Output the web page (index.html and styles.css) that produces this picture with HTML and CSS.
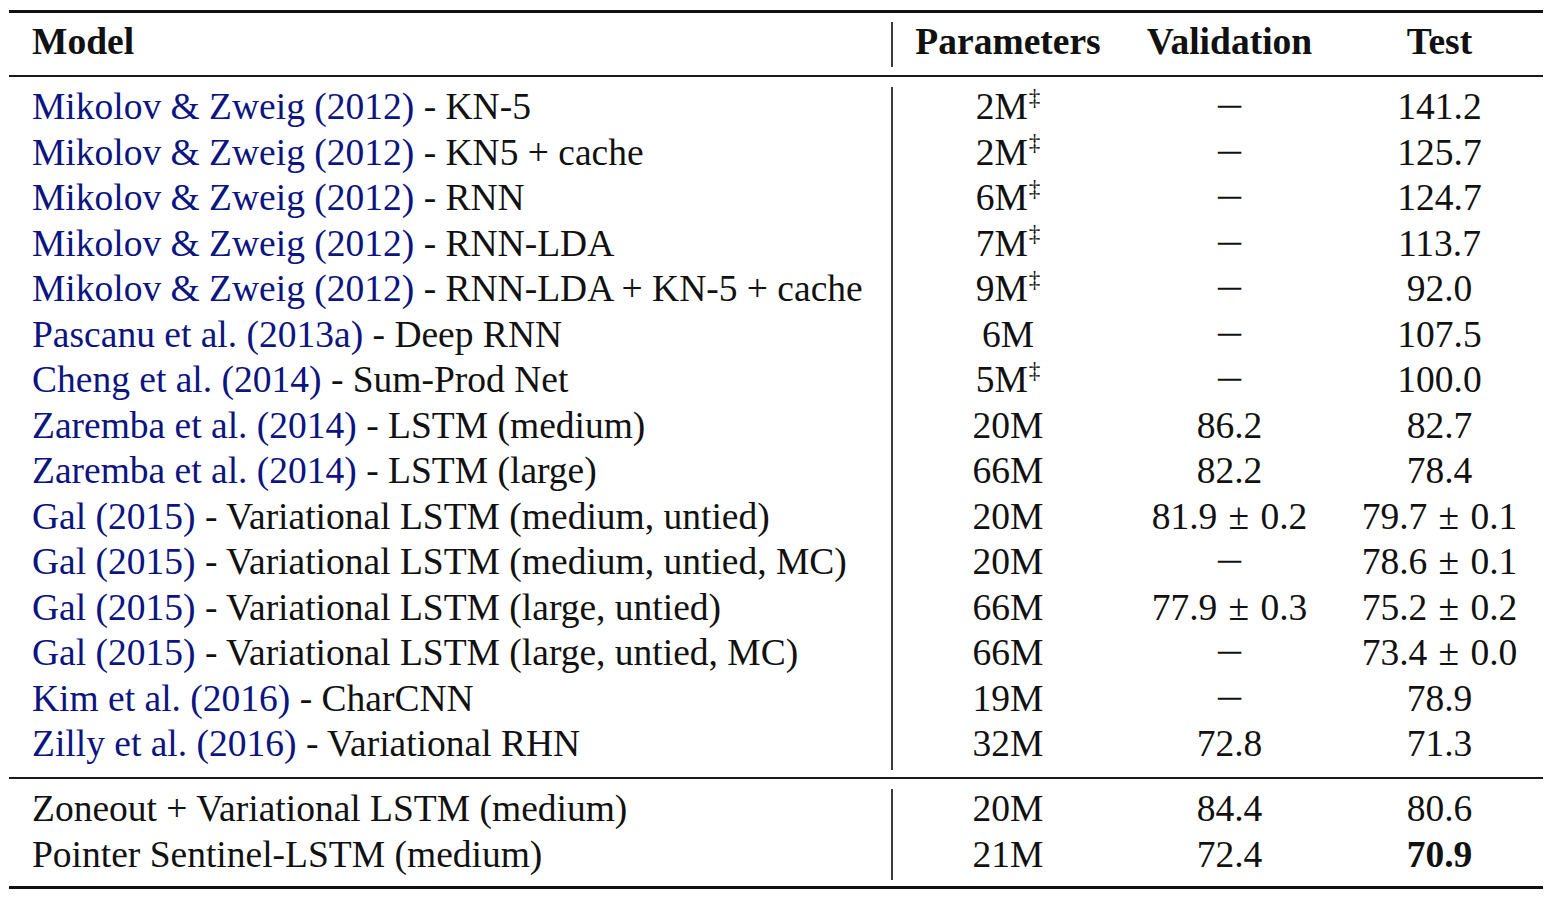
FILE: index.html
```html
<!DOCTYPE html>
<html>
<head>
<meta charset="utf-8">
<link rel="stylesheet" href="styles.css">
</head>
<body>
<div class="table">
  <div class="rule thick"></div>
  <div class="sec head">
    <div class="c model">Model</div>
    <div class="c params">Parameters</div>
    <div class="c">Validation</div>
    <div class="c">Test</div>
  </div>
  <div class="rule"></div>
  <div class="sec body">
    <div class="c model"><span class="cite">Mikolov &amp; Zweig (2012)</span> - KN-5</div>
    <div class="c params">2M<sup>‡</sup></div>
    <div class="c"><span class="dash">−</span></div>
    <div class="c">141.2</div>

    <div class="c model"><span class="cite">Mikolov &amp; Zweig (2012)</span> - KN5 + cache</div>
    <div class="c params">2M<sup>‡</sup></div>
    <div class="c"><span class="dash">−</span></div>
    <div class="c">125.7</div>

    <div class="c model"><span class="cite">Mikolov &amp; Zweig (2012)</span> - RNN</div>
    <div class="c params">6M<sup>‡</sup></div>
    <div class="c"><span class="dash">−</span></div>
    <div class="c">124.7</div>

    <div class="c model"><span class="cite">Mikolov &amp; Zweig (2012)</span> - RNN-LDA</div>
    <div class="c params">7M<sup>‡</sup></div>
    <div class="c"><span class="dash">−</span></div>
    <div class="c">113.7</div>

    <div class="c model"><span class="cite">Mikolov &amp; Zweig (2012)</span> - RNN-LDA + KN-5 + cache</div>
    <div class="c params">9M<sup>‡</sup></div>
    <div class="c"><span class="dash">−</span></div>
    <div class="c">92.0</div>

    <div class="c model"><span class="cite">Pascanu et al. (2013a)</span> - Deep RNN</div>
    <div class="c params">6M</div>
    <div class="c"><span class="dash">−</span></div>
    <div class="c">107.5</div>

    <div class="c model"><span class="cite">Cheng et al. (2014)</span> - Sum-Prod Net</div>
    <div class="c params">5M<sup>‡</sup></div>
    <div class="c"><span class="dash">−</span></div>
    <div class="c">100.0</div>

    <div class="c model"><span class="cite">Zaremba et al. (2014)</span> - LSTM (medium)</div>
    <div class="c params">20M</div>
    <div class="c">86.2</div>
    <div class="c">82.7</div>

    <div class="c model"><span class="cite">Zaremba et al. (2014)</span> - LSTM (large)</div>
    <div class="c params">66M</div>
    <div class="c">82.2</div>
    <div class="c">78.4</div>

    <div class="c model"><span class="cite">Gal (2015)</span> - Variational LSTM (medium, untied)</div>
    <div class="c params">20M</div>
    <div class="c">81.9<span class="pm">±</span>0.2</div>
    <div class="c">79.7<span class="pm">±</span>0.1</div>

    <div class="c model"><span class="cite">Gal (2015)</span> - Variational LSTM (medium, untied, MC)</div>
    <div class="c params">20M</div>
    <div class="c"><span class="dash">−</span></div>
    <div class="c">78.6<span class="pm">±</span>0.1</div>

    <div class="c model"><span class="cite">Gal (2015)</span> - Variational LSTM (large, untied)</div>
    <div class="c params">66M</div>
    <div class="c">77.9<span class="pm">±</span>0.3</div>
    <div class="c">75.2<span class="pm">±</span>0.2</div>

    <div class="c model"><span class="cite">Gal (2015)</span> - Variational LSTM (large, untied, MC)</div>
    <div class="c params">66M</div>
    <div class="c"><span class="dash">−</span></div>
    <div class="c">73.4<span class="pm">±</span>0.0</div>

    <div class="c model"><span class="cite">Kim et al. (2016)</span> - CharCNN</div>
    <div class="c params">19M</div>
    <div class="c"><span class="dash">−</span></div>
    <div class="c">78.9</div>

    <div class="c model"><span class="cite">Zilly et al. (2016)</span> - Variational RHN</div>
    <div class="c params">32M</div>
    <div class="c">72.8</div>
    <div class="c">71.3</div>
  </div>
  <div class="rule"></div>
  <div class="sec last">
    <div class="c model">Zoneout + Variational LSTM (medium)</div>
    <div class="c params">20M</div>
    <div class="c">84.4</div>
    <div class="c">80.6</div>

    <div class="c model">Pointer Sentinel-LSTM (medium)</div>
    <div class="c params">21M</div>
    <div class="c">72.4</div>
    <div class="c"><b class="best">70.9</b></div>
  </div>
  <div class="rule thick"></div>
</div>
</body>
</html>
```

FILE: styles.css
```css
html, body {
  margin: 0;
  padding: 0;
  background: #ffffff;
}

body {
  font-family: "Liberation Serif", "Times New Roman", serif;
  font-size: 37.5px;
  color: #111111;
}

.table {
  width: 1534px;
  margin: 10px 0 0 9px;
}

.rule {
  height: 2px;
  background: #1a1a1a;
}

.rule.thick {
  height: 3px;
  background: #111111;
}

.sec {
  display: grid;
  grid-template-columns: 882px 232px 213px 207px;
}

.head {
  margin: 9px 0 8px;
  font-weight: bold;
}

.body {
  margin: 10px 0 7.5px;
}

.last {
  margin: 10px 0 6px;
}

.c {
  text-align: center;
  line-height: 39.5px;
  height: 39.5px;
  padding-bottom: 6px;
  white-space: nowrap;
}

.head .c {
  line-height: 39px;
  height: 39px;
}

.c.model {
  text-align: left;
  padding-left: 23px;
}

.c.params {
  border-left: 2px solid #3c3c3c;
}

.cite {
  color: #0c1480;
}

sup {
  font-size: 0.62em;
  line-height: 0;
  vertical-align: 0.62em;
  margin-left: 1px;
}

.pm {
  margin: 0 0.3em;
}

.dash {
  display: inline-block;
  transform: scaleX(1.35);
}

.best {
  font-weight: bold;
}
```
